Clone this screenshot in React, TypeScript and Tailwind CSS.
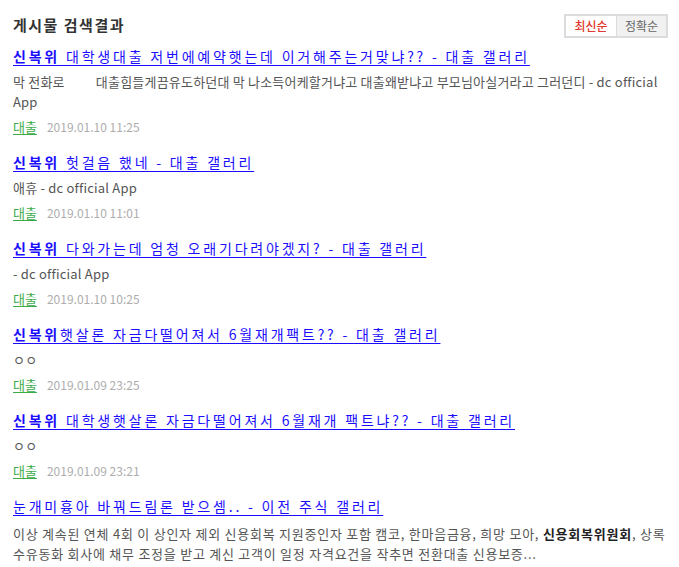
import React from "react";

type Post = {
  bold: string;
  rest: string;
  desc: React.ReactNode;
  cat?: string;
  date?: string;
};

const posts: Post[] = [
  {
    bold: "신복위",
    rest: " 대학생대출 저번에예약햇는데 이거해주는거맞냐?? - 대출 갤러리",
    desc: "막 전화로\u00a0\u00a0\u00a0\u00a0\u00a0\u00a0\u00a0\u00a0\u00a0\u00a0대출힘들게끔유도하던대 막 나소득어케할거냐고 대출왜받냐고 부모님아실거라고 그러던디 - dc official App",
    cat: "대출",
    date: "2019.01.10 11:25",
  },
  {
    bold: "신복위",
    rest: " 헛걸음 했네 - 대출 갤러리",
    desc: "애휴 - dc official App",
    cat: "대출",
    date: "2019.01.10 11:01",
  },
  {
    bold: "신복위",
    rest: " 다와가는데 엄청 오래기다려야겠지? - 대출 갤러리",
    desc: "- dc official App",
    cat: "대출",
    date: "2019.01.10 10:25",
  },
  {
    bold: "신복위",
    rest: "햇살론 자금다떨어져서 6월재개팩트?? - 대출 갤러리",
    desc: "ㅇㅇ",
    cat: "대출",
    date: "2019.01.09 23:25",
  },
  {
    bold: "신복위",
    rest: " 대학생햇살론 자금다떨어져서 6월재개 팩트냐?? - 대출 갤러리",
    desc: "ㅇㅇ",
    cat: "대출",
    date: "2019.01.09 23:21",
  },
  {
    bold: "",
    rest: "눈개미흉아 바꿔드림론 받으셈.. - 이전 주식 갤러리",
    desc: (
      <>
        이상 계속된 연체 4회 이 상인자 제외 신용회복 지원중인자 포함 캠코, 한마음금융, 희망 모아,{" "}
        <b className="font-bold text-[#222]">신용회복위원회</b>, 상록수유동화 회사에 채무 조정을 받고 계신 고객이 일정
        자격요건을 작추면 전환대출 신용보증...
      </>
    ),
  },
];

export default function App() {
  return (
    <div className="w-[679px] h-[567px] overflow-hidden bg-white px-[13px] font-['Noto_Sans_CJK_KR','Liberation_Sans',sans-serif]">
      {/* Header */}
      <div className="flex items-center justify-between pt-[12px] h-[38px]">
        <h2 className="text-[15px] font-bold text-[#333] tracking-[1.5px] leading-[20px]">게시물 검색결과</h2>
        <div className="flex border-2 border-[#dcdcdc] mr-[-2px] mt-[2px]">
          <button className="w-[50px] h-[20px] bg-white text-[12px] leading-[20px] text-[#e0392f] font-medium">
            최신순
          </button>
          <button className="w-[50px] h-[20px] bg-[#f1f1f1] border-l border-[#dcdcdc] text-[12px] leading-[20px] text-[#666]">
            정확순
          </button>
        </div>
      </div>

      {/* Results */}
      <ul className="mt-[6px]">
        {posts.map((p, i) => (
          <li key={i} className="pb-[13px]">
            <a
              href="#"
              className="block text-[14px] leading-[24px] text-[#1a0dff] underline underline-offset-[3px] tracking-[2.8px]"
            >
              {p.bold && <b className="font-bold">{p.bold}</b>}
              {p.rest}
            </a>
            <p
              className={
                p.cat
                  ? "mt-[4px] text-[13px] leading-[20px] text-[#555] tracking-[0.2px]"
                  : "mt-[6px] text-[13px] leading-[20px] text-[#555] tracking-[0.75px]"
              }
            >
              {p.desc}
            </p>
            {p.cat && (
              <div className="mt-[5px] flex items-center gap-[10px] text-[12px] leading-[20px]">
                <a href="#" className="text-[13px] text-[#3bab4a] underline underline-offset-[2px]">
                  {p.cat}
                </a>
                <span className="text-[#adadad]">{p.date}</span>
              </div>
            )}
          </li>
        ))}
      </ul>
    </div>
  );
}
